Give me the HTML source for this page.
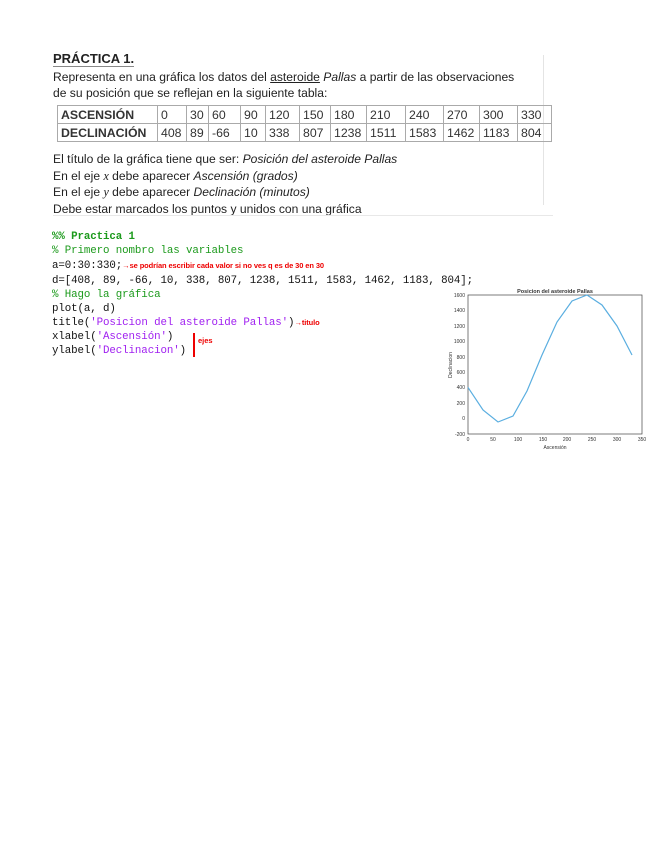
<!DOCTYPE html>
<html><head><meta charset="utf-8"><style>
body{margin:0;width:655px;height:848px;background:#fff;position:relative;font-family:"Liberation Sans",sans-serif;color:#222;overflow:hidden}
.t{position:absolute;white-space:nowrap;font-size:12.1px}
table{position:absolute;left:57px;top:105px;border-collapse:collapse;font-size:12.3px;color:#333;table-layout:fixed;width:494px}
td{border:1px solid #aaa;height:17px;padding:0 3px;text-align:left;overflow:hidden;white-space:nowrap}
.c{position:absolute;left:52px;font-family:"Liberation Mono",monospace;font-size:10.8px;white-space:nowrap;color:#111;letter-spacing:-0.1px}
.g{color:#1c9a1c}.p{color:#a020f0}.r{color:#e00;font-family:"Liberation Sans",sans-serif;font-size:7.5px;font-weight:bold}
</style></head><body>
<div class="t" style="left:53px;top:51px;font-weight:bold;font-size:13px;border-bottom:1px solid #888">PRÁCTICA 1.</div>
<div class="t" style="left:53px;top:70px">Representa en una gráfica los datos del <u>asteroide</u> <i>Pallas</i> a partir de las observaciones</div>
<div class="t" style="left:53px;top:86px">de su posición que se reflejan en la siguiente tabla:</div>
<div style="position:absolute;left:543px;top:55px;width:1px;height:150px;background:#e4e4e4"></div>
<table>
<colgroup><col style="width:100px"><col style="width:29px"><col style="width:22px"><col style="width:32px"><col style="width:25px"><col style="width:34px"><col style="width:31px"><col style="width:36px"><col style="width:39px"><col style="width:38px"><col style="width:36px"><col style="width:38px"><col style="width:34px"></colgroup>
<tr><td style="font-weight:bold">ASCENSIÓN</td><td>0</td><td>30</td><td>60</td><td>90</td><td>120</td><td>150</td><td>180</td><td>210</td><td>240</td><td>270</td><td>300</td><td>330</td></tr>
<tr><td style="font-weight:bold">DECLINACIÓN</td><td>408</td><td>89</td><td>-66</td><td>10</td><td>338</td><td>807</td><td>1238</td><td>1511</td><td>1583</td><td>1462</td><td>1183</td><td>804</td></tr>
</table>
<div class="t" style="left:53px;top:152px">El título de la gráfica tiene que ser: <i>Posición del asteroide Pallas</i></div>
<div class="t" style="left:53px;top:169px">En el eje <i style="font-family:'Liberation Serif',serif">x</i> debe aparecer <i>Ascensión (grados)</i></div>
<div class="t" style="left:53px;top:185px">En el eje <i style="font-family:'Liberation Serif',serif">y</i> debe aparecer <i>Declinación (minutos)</i></div>
<div class="t" style="left:53px;top:202px">Debe estar marcados los puntos y unidos con una gráfica</div>
<div style="position:absolute;left:53px;top:215px;width:500px;height:1px;background:#e8e8e8"></div>

<div class="c g" style="top:231px;font-weight:bold">%% Practica 1</div>
<div class="c g" style="top:245px">% Primero nombro las variables</div>
<div class="c" style="top:260px">a=0:30:330;<span class="r">→se podrían escribir cada valor si no ves q es de 30 en 30</span></div>
<div class="c" style="top:275px">d=[408, 89, -66, 10, 338, 807, 1238, 1511, 1583, 1462, 1183, 804];</div>
<div class="c g" style="top:289px">% Hago la gráfica</div>
<div class="c" style="top:303px">plot(a, d)</div>
<div class="c" style="top:317px">title(<span class="p">'Posicion del asteroide Pallas'</span>)<span class="r">→titulo</span></div>
<div class="c" style="top:331px">xlabel(<span class="p">'Ascensión'</span>)</div>
<div class="c" style="top:345px">ylabel(<span class="p">'Declinacion'</span>)</div>
<div style="position:absolute;left:193px;top:333px;width:2px;height:24px;background:#e00"></div>
<div class="r" style="position:absolute;left:198px;top:336px">ejes</div>

<svg style="position:absolute;left:440px;top:285px" width="215" height="170" font-family="Liberation Sans" font-size="5" fill="#333">
<text x="115" y="8" font-size="5.5" font-weight="bold" text-anchor="middle">Posicion del asteroide Pallas</text>
<rect x="28" y="10" width="174" height="139" fill="none" stroke="#444" stroke-width="0.7"/>
<g text-anchor="end">
<text x="25" y="12">1600</text><text x="25" y="27">1400</text><text x="25" y="43">1200</text><text x="25" y="58">1000</text><text x="25" y="74">800</text><text x="25" y="89">600</text><text x="25" y="104">400</text><text x="25" y="120">200</text><text x="25" y="135">0</text><text x="25" y="151">-200</text></g>
<g text-anchor="middle"><text x="28" y="156">0</text><text x="53" y="156">50</text><text x="78" y="156">100</text><text x="103" y="156">150</text><text x="127" y="156">200</text><text x="152" y="156">250</text><text x="177" y="156">300</text><text x="202" y="156">350</text>
<text x="115" y="164">Ascensión</text></g>
<text transform="translate(12,80) rotate(-90)" text-anchor="middle">Declinacion</text>
<polyline fill="none" stroke="#5aaee0" stroke-width="1.2" points="28,102.4 43,125 58,137 73,131 87,106 102,70 117,37 132,16 147,10 162,20 177,41 192,70"/>
</svg>
</body></html>
